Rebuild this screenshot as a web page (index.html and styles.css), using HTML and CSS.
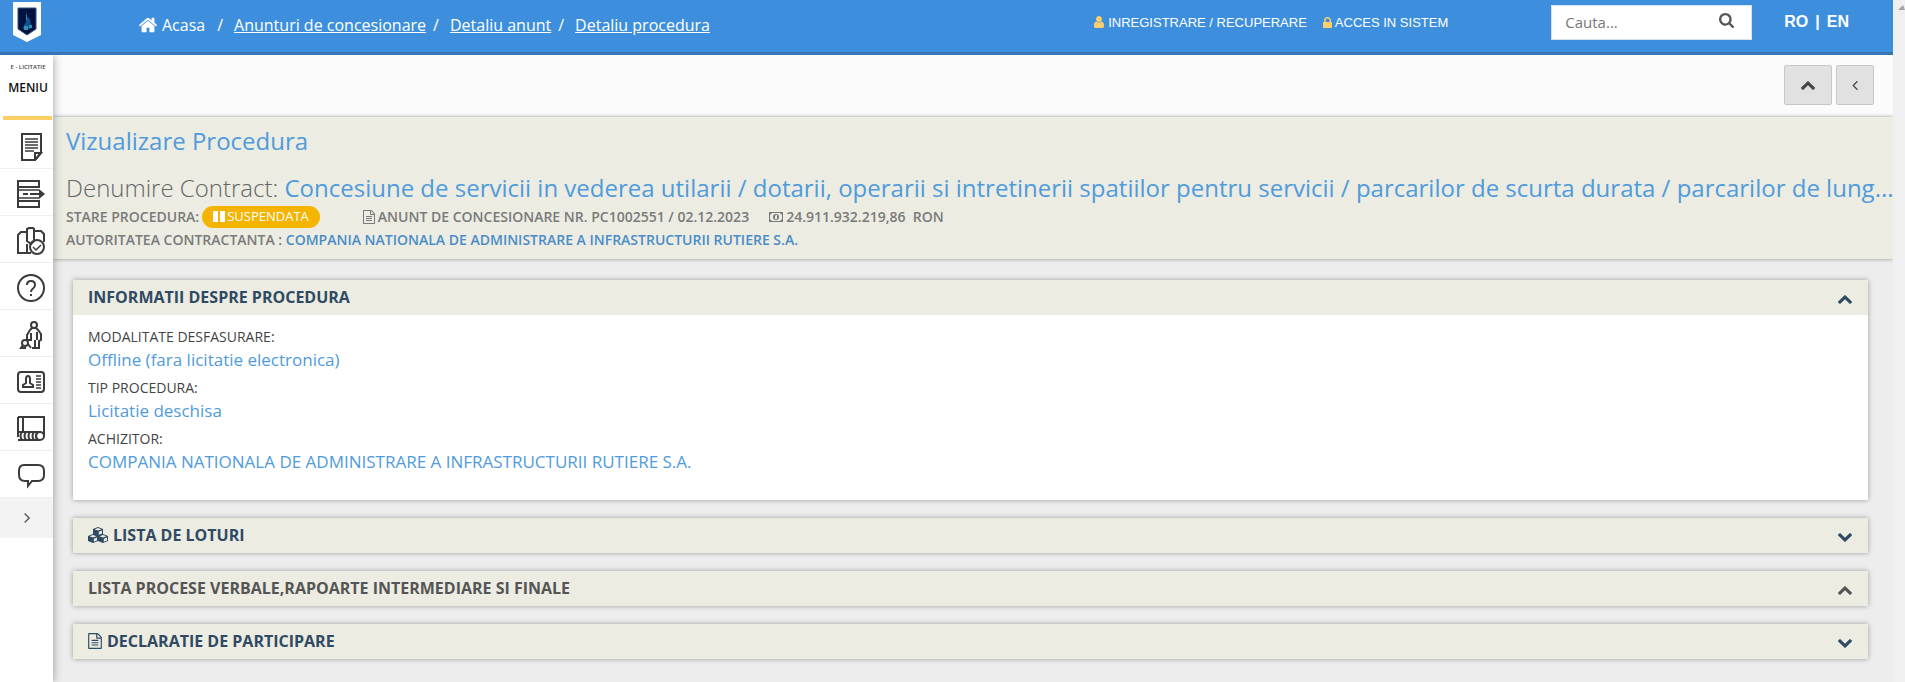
FILE: index.html
```html
<!DOCTYPE html>
<html lang="ro">
  <head>
    <meta charset="utf-8">
    <title>Vizualizare Procedura</title>
    <link rel="stylesheet" href="styles.css">
  </head>
  <body>
    <svg class="defs" aria-hidden="true">
      <symbol id="home" viewBox="0 0 1792 1792"><path d="M1472 992v480q0 26-19 45t-45 19h-384v-384h-256v384h-384q-26 0-45-19t-19-45v-480q0-1 .5-3t.5-3l575-474 575 474q1 2 1 6zm223-69l-62 74q-8 9-21 11h-3q-13 0-21-7l-692-577-692 577q-12 8-24 7-13-2-21-11l-62-74q-8-10-7-23.5t11-21.5l719-599q32-26 76-26t76 26l244 204v-195q0-14 9-23t23-9h192q14 0 23 9t9 23v408l219 182q10 8 11 21.5t-7 23.5z"/></symbol>
      <symbol id="user" viewBox="256 128 1280 1536"><path d="M1536 1399q0 109-62.5 187t-150.5 78h-854q-88 0-150.5-78t-62.5-187q0-85 8.5-160.5t31.5-152 58.5-131 94-89 134.5-34.5q131 128 313 128t313-128q76 0 134.5 34.5t94 89 58.5 131 31.5 152 8.5 160.5zm-256-887q0 159-112.5 271.5t-271.5 112.5-271.5-112.5-112.5-271.5 112.5-271.5 271.5-112.5 271.5 112.5 112.5 271.5z"/></symbol>
      <symbol id="lock" viewBox="320 128 1152 1408"><path d="M640 768h512v-192q0-106-75-181t-181-75-181 75-75 181v192zm832 96v576q0 40-28 68t-68 28h-960q-40 0-68-28t-28-68v-576q0-40 28-68t68-28h32v-192q0-184 132-316t316-132 316 132 132 316v192h32q40 0 68 28t28 68z"/></symbol>
      <symbol id="search" viewBox="64 128 1664 1664"><path d="M1216 832q0-185-131.5-316.5t-316.5-131.5-316.5 131.5-131.5 316.5 131.5 316.5 316.5 131.5 316.5-131.5 131.5-316.5zm512 832q0 52-38 90t-90 38q-54 0-90-38l-343-342q-179 124-399 124-143 0-273.5-55.5t-225-150-150-225-55.5-273.5 55.5-273.5 150-225 225-150 273.5-55.5 273.5 55.5 225 150 150 225 55.5 273.5q0 220-124 399l343 343q37 37 37 90z"/></symbol>
      <symbol id="up" viewBox="90 480 1612 1036"><path d="M1683 1331l-166 165q-19 19-45 19t-45-19l-531-531-531 531q-19 19-45 19t-45-19l-166-165q-19-19-19-45.5t19-45.5l742-741q19-19 45-19t45 19l742 741q19 19 19 45.5t-19 45.5z"/></symbol>
      <symbol id="down" viewBox="90 532 1612 1036"><path d="M1683 808l-742 741q-19 19-45 19t-45-19l-742-741q-19-19-19-45.5t19-45.5l166-165q19-19 45-19t45 19l531 531 531-531q19-19 45-19t45 19l166 165q19 19 19 45.5t-19 45.5z"/></symbol>
      <symbol id="left" viewBox="594 461 609 998"><path d="M1203 544q0 13-10 23l-393 393 393 393q10 10 10 23t-10 23l-50 50q-10 10-23 10t-23-10l-466-466q-10-10-10-23t10-23l466-466q10-10 23-10t23 10l50 50q10 10 10 23z"/></symbol>
      <symbol id="right" viewBox="562 461 609 998"><path d="M1171 960q0 13-10 23l-466 466q-10 10-23 10t-23-10l-50-50q-10-10-10-23t10-23l393-393-393-393q-10-10-10-23t10-23l50-50q10-10 23-10t23 10l466 466q10 10 10 23z"/></symbol>
      <symbol id="file" viewBox="128 0 1536 1792"><path d="M1596 380q28 28 48 76t20 88v1152q0 40-28 68t-68 28h-1344q-40 0-68-28t-28-68v-1600q0-40 28-68t68-28h896q40 0 88 20t76 48zm-444-244v376h376q-10-29-22-41l-313-313q-12-12-41-22zm384 1528v-1024h-416q-40 0-68-28t-28-68v-416h-768v1536h1280zm-1024-864q0-14 9-23t23-9h704q14 0 23 9t9 23v64q0 14-9 23t-23 9h-704q-14 0-23-9t-9-23v-64zm736 224q14 0 23 9t9 23v64q0 14-9 23t-23 9h-704q-14 0-23-9t-9-23v-64q0-14 9-23t23-9h704zm0 256q14 0 23 9t9 23v64q0 14-9 23t-23 9h-704q-14 0-23-9t-9-23v-64q0-14 9-23t23-9h704z"/></symbol>
      <symbol id="cube" viewBox="0 0 20 16">
        <path d="M10 0l5 2v5l-5 2-5-2V2zM5 7l5 2v5l-5 2-5-2V9zM15 7l5 2v5l-5 2-5-2V9z"/>
        <path class="cube-face" d="M10 1l3.500 1.300-3.500 1.300-3.500-1.300zM10.800 4.800l3.200-1.300v2.900l-3.200 1.300zM5 8l3.500 1.300L5 10.600 1.500 9.300zM5.800 11.800L9 10.500v2.900l-3.200 1.300zM15 8l3.500 1.300-3.500 1.300-3.500-1.300zM15.800 11.800l3.200-1.300v2.900l-3.200 1.300z"/>
      </symbol>
    </svg>

    <div class="screen">
      <div class="page">
        <header class="header">
          <a class="logo" href="#" aria-label="E-licitatie">
            <svg width="28" height="40" viewBox="0 0 28 40">
              <path fill="#fff" d="M0 0h28v33l-14 7-14-7z"/>
              <path fill="#04123f" stroke="#2d5580" d="M5 6h18v21l-9 6-9-6z"/>
              <path fill="#14508a" d="M13 8l1 7 3 2 1 6 1 1-2 3h-7l1-4 2-3z"/>
              <path fill="#2f93b8" d="M11 24h4v4h-4zM16 23h3v3h-3zM13 13h1v5h-1z"/>
            </svg>
          </a>
          <nav class="breadcrumb">
            <a class="home" href="#"><svg width="20" height="20"><use href="#home"/></svg>Acasa</a>
            <span class="sep">/</span>
            <a href="#">Anunturi de concesionare</a>
            <span class="sep">/</span>
            <a href="#">Detaliu anunt</a>
            <span class="sep">/</span>
            <a href="#">Detaliu procedura</a>
          </nav>
          <div class="tools">
            <div class="account">
              <a href="#"><svg width="12" height="12"><use href="#user"/></svg>INREGISTRARE / RECUPERARE</a>
              <a href="#"><svg width="9" height="11"><use href="#lock"/></svg>ACCES IN SISTEM</a>
            </div>
            <form class="search">
              <input type="text" placeholder="Cauta..." aria-label="Cauta">
              <button type="button" aria-label="Cauta"><svg width="15" height="15"><use href="#search"/></svg></button>
            </form>
            <div class="lang"><a href="#">RO</a><span>|</span><a href="#">EN</a></div>
          </div>
        </header>

        <div class="wrap">
          <aside class="sidebar">
            <div class="brand">E - LICITATIE</div>
            <div class="menu-title">MENIU</div>
            <nav class="menu">
              <a href="#" aria-label="Anunturi"><svg viewBox="0 0 28 28"><path d="M5 1h19v19l-6 7H5z"/><path d="M24 20h-6v7z"/><path class="thin" d="M8 6h13M8 9h13M8 12h13M8 15h13M8 18h9"/></svg></a>
              <a href="#" aria-label="Proceduri"><svg viewBox="0 0 28 28"><path d="M1 1h21v6H1zM1 7v14M1 21h21v6H1z"/><path class="thin" d="M1 10h21M1 18h21"/><path d="M6 14h5M13 14h10"/><path class="solid" d="M22 9l6 5-6 5z"/></svg></a>
              <a href="#" aria-label="Cataloage"><svg viewBox="0 0 28 28"><path d="M10 5H4L1 8v18h13M17 4h7l3 3v8M10 2l2-1h4l1 1v12l-3 3-4-3zM10 17v9"/><circle cx="20" cy="20" r="7"/><path class="thin" d="M16 20l3 3 5-5"/></svg></a>
              <a href="#" aria-label="Ajutor"><svg viewBox="0 0 28 28"><circle cx="14" cy="14" r="13"/><path d="M10 11q0-4 4-4t4 4q0 2-2 3.500T14 18M14 20v2"/></svg></a>
              <a href="#" aria-label="Achizitori"><svg viewBox="0 0 28 28"><circle cx="17" cy="4" r="3"/><path d="M13 9l2-2h4l2 2 3 4v6l-2 1v7h-4v-8v8h-3M13 9l-3 5v5h3M14 12v8M20 11v8"/><circle cx="8" cy="22" r="3"/><path d="M6 24l-2 3h5M11 23l3 4"/></svg></a>
              <a href="#" aria-label="Contact"><svg viewBox="0 0 28 28"><rect x="1" y="4" width="26" height="20" rx="3"/><path d="M6 19v-2l3-2v-4q0-3 2-3t2 3v4l3 2v2z"/><path class="thin" d="M19 8h5M19 11h5M19 14h5M19 17h5M19 20h5"/></svg></a>
              <a href="#" aria-label="Documente"><svg viewBox="0 0 28 28"><path d="M1 2h26v20M1 2v20M6 2v15M1 17h22M1 25h22"/><circle cx="23" cy="21" r="4"/><path d="M5 17q-3 4 0 8M9 17q-3 4 0 8M13 17q-3 4 0 8M17 17q-3 4 0 8M20 18q-2 3 0 6"/></svg></a>
              <a href="#" aria-label="Mesaje"><svg viewBox="0 0 28 28"><path d="M7 3h14q6 0 6 6v4q0 6-6 6h-6l-4 5v-5H8q-6 0-6-6V9q0-6 5-6z"/></svg></a>
            </nav>
            <button class="expand" type="button" aria-label="Extinde meniul"><svg width="6" height="10"><use href="#right"/></svg></button>
          </aside>

          <main class="content">
            <div class="toolbar">
              <button class="btn-up" type="button" aria-label="Sus"><svg width="14" height="9"><use href="#up"/></svg></button>
              <button class="btn-back" type="button" aria-label="Inapoi"><svg width="6" height="9"><use href="#left"/></svg></button>
            </div>

            <section class="summary">
              <h1>Vizualizare Procedura</h1>
              <h2>Denumire Contract: <span>Concesiune de servicii in vederea utilarii / dotarii, operarii si intretinerii spatiilor pentru servicii / parcarilor de scurta durata / parcarilor de lung...</span></h2>
              <div class="meta">
                <div class="status">STARE PROCEDURA: <span class="badge"><svg width="12" height="11" viewBox="0 0 12 11"><path d="M0 0h5v11H0zM7 0h5v11H7z"/></svg>SUSPENDATA</span></div>
                <div class="notice"><svg width="12" height="14"><use href="#file"/></svg>ANUNT DE CONCESIONARE NR. PC1002551 / 02.12.2023</div>
                <div class="value"><svg width="14" height="10" viewBox="0 0 14 10"><path fill-rule="evenodd" d="M0 0h14v10H0zM3 1L1 3v4l2 2h8l2-2V3l-2-2z"/><path fill-rule="evenodd" d="M7 2q3 0 3 3T7 8 4 5t3-3zM6 4v3h2V3H7z"/></svg>24.911.932.219,86&nbsp; RON</div>
              </div>
              <div class="meta">AUTORITATEA CONTRACTANTA :&nbsp;<a href="#">COMPANIA NATIONALA DE ADMINISTRARE A INFRASTRUCTURII RUTIERE S.A.</a></div>
            </section>

            <div class="panels">
              <section class="panel">
                <button class="panel-head" type="button">INFORMATII DESPRE PROCEDURA<svg class="arrow"><use href="#up"/></svg></button>
                <dl class="panel-body">
                  <dt>MODALITATE DESFASURARE:</dt>
                  <dd>Offline (fara licitatie electronica)</dd>
                  <dt>TIP PROCEDURA:</dt>
                  <dd>Licitatie deschisa</dd>
                  <dt>ACHIZITOR:</dt>
                  <dd>COMPANIA NATIONALA DE ADMINISTRARE A INFRASTRUCTURII RUTIERE S.A.</dd>
                </dl>
              </section>
              <section class="panel">
                <button class="panel-head" type="button"><svg width="20" height="16"><use href="#cube"/></svg>LISTA DE LOTURI<svg class="arrow"><use href="#down"/></svg></button>
              </section>
              <section class="panel">
                <button class="panel-head grey" type="button">LISTA PROCESE VERBALE,RAPOARTE INTERMEDIARE SI FINALE<svg class="arrow"><use href="#up"/></svg></button>
              </section>
              <section class="panel">
                <button class="panel-head" type="button"><svg width="14" height="16"><use href="#file"/></svg>DECLARATIE DE PARTICIPARE<svg class="arrow"><use href="#down"/></svg></button>
              </section>
            </div>
          </main>
        </div>
      </div>
      <div class="scroll"></div>
    </div>
  </body>
</html>
```
FILE: styles.css
```css
* {
  box-sizing: border-box;
}

body {
  margin: 0;
  font-family: "Open Sans", sans-serif;
  font-size: 14px;
  color: #444;
  background: #ededed;
}

a {
  color: inherit;
  text-decoration: none;
}

button {
  font-family: inherit;
  border: none;
  padding: 0;
  cursor: pointer;
}

svg {
  fill: currentColor;
  flex-shrink: 0;
}

.defs {
  display: none;
}

.screen {
  display: flex;
  min-height: 100vh;
}

.page {
  flex: 1;
  min-width: 0;
  display: flex;
  flex-direction: column;
}

.scroll {
  width: 12px;
  background: #f0f0f0;
  padding: 5px 0 0 5px;
}

.scroll::before {
  content: "";
  display: block;
  border: 5px solid transparent;
  border-top: none;
  border-right-width: 2px;
  border-bottom-color: #a3a3a3;
}

/* header */
.header {
  display: flex;
  height: 55px;
  background: #3d8fdd;
  border-bottom: 3px solid #3575b5;
  color: #fff;
}

.logo {
  margin: 2px 0 0 13px;
}

.breadcrumb {
  display: flex;
  align-items: center;
  margin-left: 97px;
  padding-bottom: 2px;
  font-size: 16px;
}

.breadcrumb a {
  text-decoration: underline;
}

.breadcrumb .home {
  display: flex;
  align-items: center;
  gap: 4px;
  text-decoration: none;
}

.sep {
  margin: 0 11px 0 7px;
}

.home + .sep {
  margin-left: 12px;
}

.tools {
  display: flex;
  align-items: center;
  margin-left: auto;
  padding: 0 44px 8px 0;
  font-family: "Liberation Sans", sans-serif;
}

.account {
  display: flex;
  gap: 16px;
  font-size: 13px;
}

.account a {
  display: flex;
  align-items: center;
  gap: 3px;
}

.account svg {
  color: #fbcf6b;
}

.search {
  display: flex;
  width: 201px;
  height: 35px;
  margin: 0 32px 0 103px;
  background: #fff;
  border: 1px solid #d5e3f0;
}

.search input {
  flex: 1;
  min-width: 0;
  border: none;
  padding: 0 0 0 13px;
  font-family: "Open Sans", sans-serif;
  font-size: 15px;
  background: none;
}

.search input::placeholder {
  color: #777;
}

.search button {
  width: 50px;
  background: none;
  color: #555;
}

.lang {
  display: flex;
  gap: 7px;
  font-size: 16px;
  font-weight: bold;
}

/* sidebar */
.wrap {
  flex: 1;
  display: flex;
}

.sidebar {
  width: 53px;
  flex-shrink: 0;
  background: #fff;
  box-shadow: 1px 0 8px rgba(0, 0, 0, 0.3);
  clip-path: inset(0 -12px 0 0);
  z-index: 1;
  text-align: center;
}

.brand {
  margin-top: 8px;
  padding-left: 3px;
  font-size: 6px;
  line-height: 8px;
  font-weight: 600;
}

.menu-title {
  padding: 9px 0 18px 3px;
  font-size: 12px;
  line-height: 16px;
  font-weight: 600;
  color: #111;
}

.menu {
  padding-top: 2px;
}

.menu::before {
  content: "";
  display: block;
  height: 4px;
  margin: 0 1px 2px 3px;
  background: #fbcf63;
}

.menu a {
  display: block;
  height: 47px;
  padding: 11px 8px 0 17px;
  border-bottom: 1px solid #eee;
}

.menu svg {
  display: block;
  width: 28px;
  height: 28px;
  fill: none;
  stroke: #3b3b3b;
  stroke-width: 2;
}

.menu .thin {
  stroke-width: 1.5;
}

.menu .solid {
  fill: #3b3b3b;
  stroke: none;
}

.expand {
  width: 100%;
  height: 40px;
  background: #f3f3f3;
  color: #555;
}

/* content */
.content {
  flex: 1;
  min-width: 0;
}

.toolbar {
  display: flex;
  gap: 4px;
  justify-content: flex-end;
  height: 62px;
  padding: 10px 19px 0 0;
  background: #fbfbfc;
}

.toolbar button {
  width: 38px;
  height: 40px;
  background: #e1e1e1;
  border: 1px solid #c8c8c8;
  border-radius: 2px;
  color: #444;
}

.toolbar .btn-up {
  width: 48px;
}

.summary {
  padding: 7px 13px 8px;
  background: #ecece2;
  box-shadow: 0 0 4px rgba(0, 0, 0, 0.4);
  color: #7a7a7a;
}

.summary h1 {
  margin: 0 0 14px;
  font-size: 24px;
  line-height: 33px;
  font-weight: 400;
  color: #4f9bdc;
}

.summary h2 {
  margin: 0 0 1px;
  font-size: 24px;
  line-height: 33px;
  font-weight: 300;
  color: #666;
  white-space: nowrap;
}

.summary h2 span {
  font-weight: 400;
  color: #4f9bdc;
}

.meta {
  display: flex;
  align-items: center;
  font-size: 14px;
  line-height: 23px;
  font-weight: 600;
}

.meta a {
  color: #4a8cc7;
}

.status,
.notice,
.value {
  display: flex;
  align-items: center;
  gap: 3px;
}

.notice {
  margin: 0 20px 0 43px;
}

.badge {
  display: flex;
  align-items: center;
  gap: 2px;
  height: 22px;
  padding: 0 11px;
  border-radius: 11px;
  background: #f4b400;
  color: #fff;
  font-size: 13px;
  font-weight: 400;
}

.panels {
  display: flex;
  flex-direction: column;
  gap: 18px;
  padding: 21px 25px 20px 20px;
}

.panel {
  background: #fff;
  box-shadow: 0 0 5px rgba(0, 0, 0, 0.35);
}

.panel-head {
  display: flex;
  align-items: center;
  gap: 5px;
  width: 100%;
  height: 35px;
  padding: 0 16px 1px 15px;
  background: #ecece2;
  color: #2f4a62;
  font-size: 16px;
  font-weight: 700;
}

.panel-head.grey {
  color: #555;
}

.arrow {
  width: 14px;
  height: 9px;
  margin: 5px 0 0 auto;
}

.cube-face {
  fill: #ecece2;
}

.panel-body {
  margin: 0;
  padding: 12px 15px 20px;
}

.panel-body dt {
  font-size: 14px;
  line-height: 20px;
}

.panel-body dd {
  margin: 0 0 6px;
  font-size: 17px;
  line-height: 25px;
  color: #4f9bdc;
}
```
